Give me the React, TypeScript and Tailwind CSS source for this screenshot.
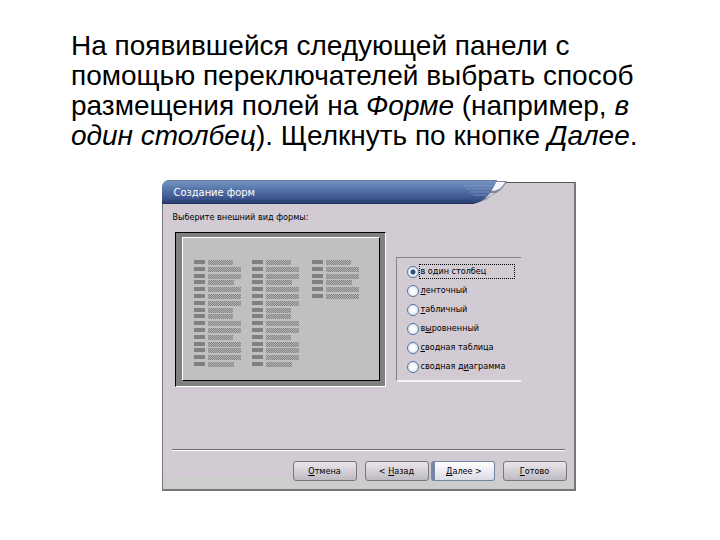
import { useState } from "react";
import type { ReactNode } from "react";

const lineWidths = [25, 33, 33, 26, 33, 33, 33, 25, 25, 33, 33, 25, 33, 33, 33, 26];
const columns = [
  { x: 11, rows: 16 },
  { x: 69, rows: 16 },
  { x: 129, rows: 6 },
];

function FormPreview() {
  return (
    <svg viewBox="0 0 196 141" className="block h-[141px] w-[196px]" role="img" shapeRendering="crispEdges">
      <defs>
        <pattern id="hatch" width="2" height="2" patternUnits="userSpaceOnUse">
          <rect width="2" height="2" fill="#b2b2b2" />
          <rect width="1" height="1" fill="#858585" />
          <rect x="1" y="1" width="1" height="1" fill="#858585" />
        </pattern>
      </defs>
      {columns.map((column) =>
        lineWidths.slice(0, column.rows).map((width, row) => {
          const y = Math.round(22 + row * 6.8);
          return (
            <g key={`${column.x}-${row}`}>
              <rect x={column.x} y={y} width="11" height="4" fill="#808080" />
              <rect x={column.x + 14} y={y} width={width} height="5" fill="url(#hatch)" />
            </g>
          );
        }),
      )}
    </svg>
  );
}

function TitleBar() {
  return (
    <header className="relative h-[24px]">
      <svg viewBox="0 0 414 24" className="absolute inset-0 h-full w-full" preserveAspectRatio="none" aria-hidden="true">
        <defs>
          <linearGradient id="title" x1="0" y1="0" x2="0" y2="1">
            <stop offset="0" stopColor="#7898c6" />
            <stop offset="0.35" stopColor="#5a78ac" />
            <stop offset="0.75" stopColor="#3c568f" />
            <stop offset="1" stopColor="#26396b" />
          </linearGradient>
        </defs>
        <rect x="300" y="2" width="114" height="22" fill="#d0cbd0" />
        <rect x="330" y="2" width="84" height="1" fill="#55555c" />
        <rect x="412" y="2" width="2" height="22" fill="#77757b" />
        <path d="M333 1H345C341 8 338 12 330 15C325 20 319 22 312 23Z" fill="#85869a" />
        <path d="M334 2H343C340 8 336 11 328 11Z" fill="#f3f4fc" />
        <path d="M325 13H333L325 18H320Z" fill="#c9cad8" />
        <path d="M0 24V6Q1 1 6 0H335C331 10 323 23 310 24Z" fill="url(#title)" />
        <path d="M5 .5H335" stroke="#6a7da2" />
        <path d="M302 6H331M304 9H329M308 12H327M311 15H325" stroke="#91a8ce" strokeWidth=".6" />
        <path d="M0 23.5H312" stroke="#24315a" />
      </svg>
      <h1 className="relative pl-[12px] text-[11px] leading-[25px] text-white">Создание форм</h1>
    </header>
  );
}

const options: { id: string; label: ReactNode }[] = [
  { id: "column", label: <>в один столбец</> },
  { id: "tape", label: <><u>л</u>енточный</> },
  { id: "table", label: <><u>т</u>абличный</> },
  { id: "justified", label: <>в<u>ы</u>ровненный</> },
  { id: "pivot", label: <><u>с</u>водная таблица</> },
  { id: "chart", label: <>сводная д<u>и</u>аграмма</> },
];

function LayoutOptions() {
  const [selected, setSelected] = useState("column");
  return (
    <fieldset className="mt-[26px] h-[125px] w-[125px] border-t border-b-2 border-l border-t-[#87838a] border-b-[#f6f2f6] border-l-[#87838a] pt-[4px] pl-[10px]">
      {options.map((option) => (
        <div key={option.id} className="flex h-[19px] items-center">
          <input
            type="radio"
            id={option.id}
            name="layout"
            checked={selected === option.id}
            onChange={() => setSelected(option.id)}
            className="h-[12px] w-[12px] shrink-0 appearance-none rounded-full border border-[#53749b] bg-[radial-gradient(circle,#ffffff_20%,#dce5f2_80%)] checked:bg-[radial-gradient(circle,#2d4f7d_28%,#e6edf6_42%)]"
          />
          <label
            htmlFor={option.id}
            className={
              selected === option.id
                ? "h-[15px] w-[96px] border border-dotted border-black pl-[1px] leading-[13px] whitespace-nowrap"
                : "border border-transparent pl-[1px] leading-[13px] whitespace-nowrap"
            }
          >
            {option.label}
          </label>
        </div>
      ))}
    </fieldset>
  );
}

const buttonBase = "h-[20px] w-[64px] rounded-[3px] border text-center leading-[18px]";
const plainButton = `${buttonBase} border-[#77757e] bg-linear-to-b from-[#e9e6eb] to-[#bebac2]`;
const nextButton = `${buttonBase} border-[#7486a3] border-l-4 bg-linear-to-b from-white to-[#dcdce8]`;

export default function App() {
  return (
    <main className="min-h-screen bg-white pt-[31px] pr-[54px] pl-[71px] font-['Liberation_Sans',Arial,sans-serif] text-black">
      <p className="text-[28px] leading-[30px]">
        На появившейся следующей панели с<br />
        помощью переключателей выбрать способ<br />
        размещения полей на <em>Форме</em> (например, <em>в</em><br />
        <em>один столбец</em>). Щелкнуть по кнопке <em>Далее</em>.
      </p>

      <section className="mx-auto mt-[29px] w-[414px] font-['DejaVu_Sans_Condensed','DejaVu_Sans',sans-serif] text-[9px]">
        <TitleBar />
        <div className="border-r-2 border-b-2 border-l border-[#77757b] bg-linear-to-b from-[#d2cbd3] from-95% to-[#cdcdce] to-96% pr-[7px] pb-[8px] pl-[9px]">
          <h2 className="pt-[7px] pl-[1px] leading-[13px]">Выберите внешний вид формы:</h2>
          <div className="flex gap-[10px] pt-[7px] pl-[3px]">
            <div className="mt-[1px] h-[155px] w-[211px] border border-t-black border-r-white border-b-white border-l-black bg-[#808080] pt-[4px] pl-[6px]">
              <div className="h-[144px] w-[198px] border border-t-white border-r-black border-b-black border-l-white bg-[#c0c0c0]">
                <FormPreview />
              </div>
            </div>
            <LayoutOptions />
          </div>
          <div className="mt-[62px] mr-[2px] h-[2px] border-t border-b border-t-[#716c74] border-b-white" />
          <div className="flex justify-end gap-[8px] pt-[10px]">
            <button type="button" className={plainButton}><u>О</u>тмена</button>
            <div className="flex gap-[2px]">
              <button type="button" className={plainButton}>&lt; <u>Н</u>азад</button>
              <button type="button" className={nextButton}><u>Д</u>алее &gt;</button>
            </div>
            <button type="button" className={plainButton}><u>Г</u>отово</button>
          </div>
        </div>
      </section>
    </main>
  );
}
